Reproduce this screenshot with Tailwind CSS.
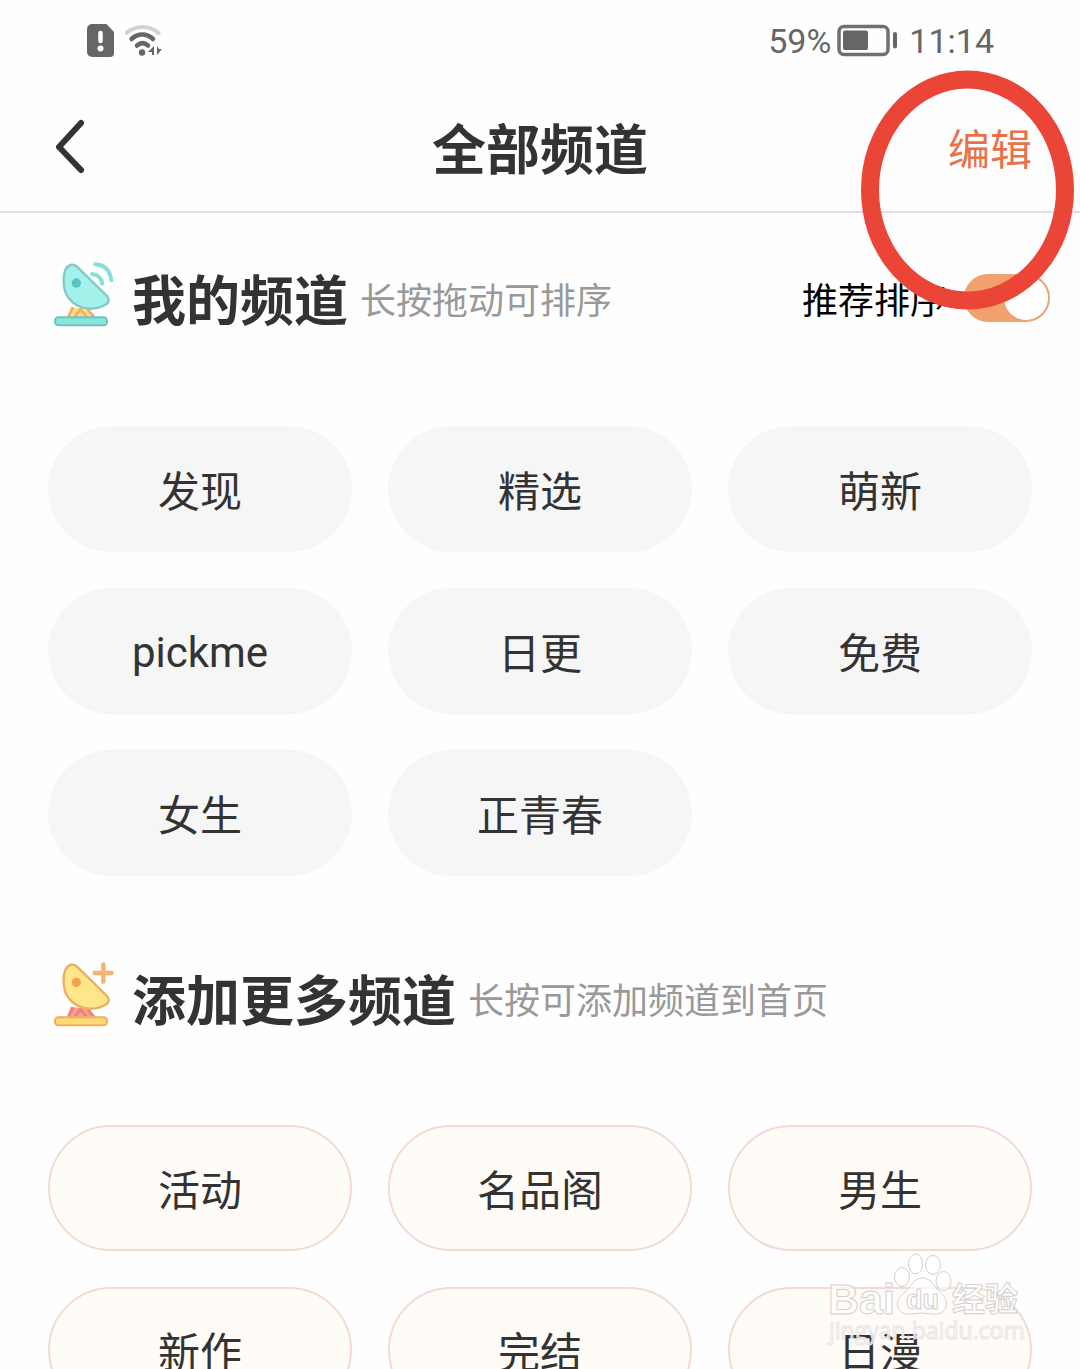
<!DOCTYPE html>
<html lang="zh-CN">
<head>
    <meta charset="UTF-8">
    <meta name="viewport" content="width=device-width, initial-scale=1.0">
    <script src="https://cdn.jsdelivr.net/npm/@tailwindcss/browser@4"></script>
    <title>全部频道</title>
</head>
<body class="bg-white">
<div class="relative h-screen overflow-hidden bg-[#fefefe] text-[#333] font-['Noto_Sans_CJK_SC',sans-serif]">
    <!-- status bar -->
    <div class="flex items-center justify-between h-[82px] pl-[87px] pr-[86px] text-[34px] leading-none text-[#666] font-[Roboto,sans-serif]">
        <div class="flex items-center gap-[10px]">
            <svg class="w-7 h-[34px]" viewBox="0 0 28 34" aria-hidden="true">
                <path d="M5 0H19.500L27 8V29a4 4 0 0 1-4 4H5a5 5 0 0 1-5-5V5a5 5 0 0 1 5-5z" fill="#666"/>
                <path d="M13.500 9v8" stroke="#fff" stroke-width="4.500" stroke-linecap="round"/>
                <circle cx="13.500" cy="24.500" r="3" fill="#fff"/>
            </svg>
            <svg class="w-[38px] h-[34px]" viewBox="125 24 38 34" fill="none" stroke-linecap="round" aria-hidden="true">
                <path d="M126.500 33c9-8 23-8 32 0" stroke="#d2d2d2" stroke-width="4"/>
                <path d="M131.500 39c6.500-6 15-6 21.500 0" stroke="#666" stroke-width="4.500"/>
                <path d="M137 45.500c3.500-3 7.500-3 11 0" stroke="#666" stroke-width="4.500"/>
                <circle cx="142" cy="52.500" r="3.200" fill="#666"/>
                <path d="M154 46v9h-2v-3h-4z M157 46v9l5-6h-3z" fill="#666"/>
            </svg>
        </div>
        <div class="flex items-center">
            <span>59%</span>
            <svg class="w-[60px] h-[34px] ml-[6px] mr-3" viewBox="0 0 60 34" aria-hidden="true">
                <rect x="2" y="2.500" width="49" height="28" rx="5" fill="none" stroke="#707070" stroke-width="3.500"/>
                <rect x="6" y="6.500" width="25" height="19.500" rx="2" fill="#666"/>
                <path d="M58 10v12.500" stroke="#666" stroke-width="4" stroke-linecap="round"/>
            </svg>
            <span>11:14</span>
        </div>
    </div>

    <!-- header -->
    <header class="grid grid-cols-3 items-center h-[131px] px-12 border-b-2 border-[#e0e0e0]">
        <button type="button" aria-label="返回" class="justify-self-start">
            <svg class="w-12 h-16" viewBox="0 0 48 64" fill="none" stroke="#333" stroke-width="6" stroke-linecap="round" stroke-linejoin="round">
                <path d="M33 8L11 32L33 55"/>
            </svg>
        </button>
        <h1 class="text-center text-[54px] leading-none font-bold whitespace-nowrap">全部频道</h1>
        <button type="button" class="justify-self-end text-[42px] leading-none text-[#e8714a]">编辑</button>
    </header>

    <!-- my channels -->
    <section class="pt-[49px]">
        <div class="flex items-center gap-3 h-[72px] pl-12 pr-[30px]">
            <svg class="size-[72px] shrink-0 overflow-visible" viewBox="24 36 216 216" fill="none" stroke-linecap="round" stroke-linejoin="round" aria-hidden="true">
                <path d="M92 170L82 200H162L150 178z" fill="#ffe08a"/>
                <path d="M98 175L86 198M121 178L106 198M123 180L138 198M145 182L160 198" stroke="#f5ab66" stroke-width="8"/>
                <rect x="45" y="202" width="156" height="24" rx="10" fill="#86e6dc" stroke="#72c3be" stroke-width="6"/>
                <path d="M76 59Q92 34 111 50L199 136Q213 151 200 162Q166 183 128 173Q91 162 76 127Q65 90 76 59z" fill="#a3f1eb" stroke="#84c9c5" stroke-width="7"/>
                <circle cx="109" cy="99" r="14" fill="#58c6bf"/>
                <path d="M156 72Q182 74 187 101M166 43Q208 46 214 91" stroke="#86dfda" stroke-width="12"/>
            </svg>
            <h2 class="text-[54px] leading-none font-bold whitespace-nowrap">我的频道</h2>
            <p class="text-[36px] leading-none text-[#999] whitespace-nowrap">长按拖动可排序</p>
            <label for="recommend" class="ml-auto text-[36px] leading-none text-black whitespace-nowrap">推荐排序</label>
            <input id="recommend" type="checkbox" checked class="appearance-none shrink-0 flex items-center justify-start checked:justify-end w-[86px] h-12 ml-[6px] rounded-full bg-[#f3a06f] border-2 border-[#eda374] before:content-[''] before:size-11 before:rounded-full before:bg-white">
        </div>
        <div class="grid grid-cols-3 gap-9 px-12 mt-[92px] text-[42px] leading-none">
            <button type="button" class="h-[126px] rounded-full bg-[#f6f6f6]">发现</button>
            <button type="button" class="h-[126px] rounded-full bg-[#f6f6f6]">精选</button>
            <button type="button" class="h-[126px] rounded-full bg-[#f6f6f6]">萌新</button>
            <button type="button" class="h-[126px] rounded-full bg-[#f6f6f6]"><span class="font-[Roboto,sans-serif]">pickme</span></button>
            <button type="button" class="h-[126px] rounded-full bg-[#f6f6f6]">日更</button>
            <button type="button" class="h-[126px] rounded-full bg-[#f6f6f6]">免费</button>
            <button type="button" class="h-[126px] rounded-full bg-[#f6f6f6]">女生</button>
            <button type="button" class="h-[126px] rounded-full bg-[#f6f6f6]">正青春</button>
        </div>
    </section>

    <!-- more channels -->
    <section class="pt-[86px]">
        <div class="flex items-center gap-3 h-[72px] pl-12 pr-[30px]">
            <svg class="size-[72px] shrink-0 overflow-visible" viewBox="24 36 216 216" fill="none" stroke-linecap="round" stroke-linejoin="round" aria-hidden="true">
                <path d="M92 170L82 200H162L150 178z" fill="#ff9c91"/>
                <path d="M98 175L86 198M121 178L106 198M123 180L138 198M145 182L160 198" stroke="#ed8078" stroke-width="8"/>
                <rect x="45" y="202" width="156" height="24" rx="10" fill="#ffd978" stroke="#eeae60" stroke-width="6"/>
                <path d="M76 59Q92 34 111 50L199 136Q213 151 200 162Q166 183 128 173Q91 162 76 127Q65 90 76 59z" fill="#ffe68a" stroke="#e9b063" stroke-width="7"/>
                <circle cx="109" cy="97" r="14" fill="#f0a54e"/>
                <path d="M164 69H215M190 43V95" stroke="#f2b576" stroke-width="13"/>
            </svg>
            <h2 class="text-[54px] leading-none font-bold whitespace-nowrap">添加更多频道</h2>
            <p class="text-[36px] leading-none text-[#999] whitespace-nowrap">长按可添加频道到首页</p>
        </div>
        <div class="grid grid-cols-3 gap-9 px-12 mt-[91px] text-[42px] leading-none">
            <button type="button" class="h-[126px] rounded-full bg-[#fffcf8] border-2 border-[#f3dad2]">活动</button>
            <button type="button" class="h-[126px] rounded-full bg-[#fffcf8] border-2 border-[#f3dad2]">名品阁</button>
            <button type="button" class="h-[126px] rounded-full bg-[#fffcf8] border-2 border-[#f3dad2]">男生</button>
            <button type="button" class="h-[126px] rounded-full bg-[#fffcf8] border-2 border-[#f3dad2]">新作</button>
            <button type="button" class="h-[126px] rounded-full bg-[#fffcf8] border-2 border-[#f3dad2]">完结</button>
            <button type="button" class="h-[126px] rounded-full bg-[#fffcf8] border-2 border-[#f3dad2]">日漫</button>
        </div>
    </section>

    <!-- marker ring around the edit button -->
    <svg class="absolute top-[70px] right-[5px] w-[215px] h-[240px] pointer-events-none" viewBox="0 0 215 240" fill="none" aria-hidden="true">
        <ellipse cx="107.500" cy="120" rx="97.500" ry="110.500" stroke="#eb4537" stroke-width="18"/>
    </svg>

    <!-- watermark -->
    <svg class="absolute bottom-[22px] right-[55px] w-[200px] h-[96px] pointer-events-none" viewBox="825 1251 200 96" fill="#fff" fill-opacity=".7" stroke="#d3d1cf" stroke-width="1" aria-hidden="true">
        <ellipse cx="902" cy="1277" rx="7.500" ry="9.500"/>
        <ellipse cx="915.500" cy="1264" rx="7" ry="10"/>
        <ellipse cx="933" cy="1265" rx="7.500" ry="9.500"/>
        <ellipse cx="943.500" cy="1281" rx="7.500" ry="9.500"/>
        <path d="M922 1278C912 1279 910 1289 903 1294C892 1303 899 1316 911 1314Q922 1312 933 1314C946 1316 951 1302 941 1293C934 1287 932 1278 922 1278z"/>
        <g font-family="'Liberation Sans','Noto Sans CJK SC',sans-serif" font-weight="bold">
            <text x="828" y="1314" font-size="43">Bai</text>
            <text x="906" y="1309" font-size="27">du</text>
            <text x="952" y="1311" font-size="33">经验</text>
            <text x="829" y="1339" font-size="23" font-weight="normal" font-family="'Open Sans',sans-serif" stroke="#e6e4e2">jingyan.baidu.com</text>
        </g>
    </svg>
</div>
</body>
</html>
